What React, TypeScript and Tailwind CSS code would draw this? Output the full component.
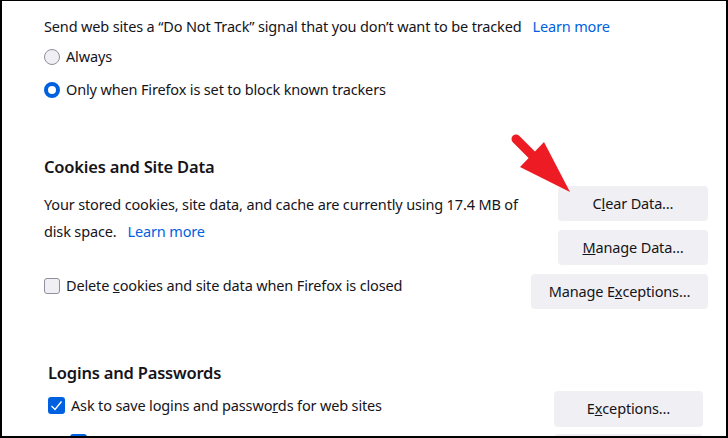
import React from "react";

const font = { fontFamily: '"Noto Sans", "Open Sans", Arial, sans-serif' };

function Radio({ checked }: { checked?: boolean }) {
  return checked ? (
    <span className="w-[16px] h-[16px] rounded-full border-[4px] border-[#0061e0] bg-white shrink-0" />
  ) : (
    <span className="w-[16px] h-[16px] rounded-full border border-[#8f8f9d] bg-[#f0f0f4] shrink-0" />
  );
}

function Checkbox({ checked }: { checked?: boolean }) {
  return checked ? (
    <span className="w-[17px] h-[17px] rounded-[3px] bg-[#0061e0] flex items-center justify-center shrink-0">
      <svg width="13" height="13" viewBox="0 0 13 13" fill="none">
        <path d="M1.5 7 L5 10.5 L11.5 2.5" stroke="white" strokeWidth="1.4" />
      </svg>
    </span>
  ) : (
    <span className="w-[16px] h-[16px] rounded-[3px] border border-[#8f8f9d] bg-[#f0f0f4] shrink-0" />
  );
}

function Btn({ w, children }: { w: string; children: React.ReactNode }) {
  return (
    <div
      className={`${w} h-[35px] rounded-[4px] bg-[#f0f0f4] flex items-center justify-center`}
    >
      {children}
    </div>
  );
}

export default function App() {
  return (
    <div
      style={font}
      className="relative w-[728px] h-[438px] overflow-hidden bg-white border-black border-t border-l-2 border-r-2 border-b-2 text-[#15141a] text-[14.5px] tracking-[-0.15px]"
    >
      {/* Do Not Track */}
      <div className="pl-[42px] pt-[12px]">
        <div className="h-[27px] flex items-center">
          <span>Send web sites a “Do Not Track” signal that you don’t want to be tracked</span>
          <span className="ml-[11px] text-[#0061e0]">Learn more</span>
        </div>
        <div className="h-[33px] flex items-center gap-[6px]">
          <Radio />
          <span>Always</span>
        </div>
        <div className="h-[33px] flex items-center gap-[6px] pt-[1px]">
          <Radio checked />
          <span>Only when Firefox is set to block known trackers</span>
        </div>
      </div>

      {/* Cookies and Site Data */}
      <div className="pl-[42px] pr-[18px] mt-[49px]">
        <div className="h-[24px] flex items-center text-[16.5px] tracking-[-0.2px] font-semibold">
          Cookies and Site Data
        </div>
        <div className="flex justify-between mt-[7px]">
          <div className="pt-[5px]">
            <div className="h-[27px] flex items-center">
              Your stored cookies, site data, and cache are currently using 17.4 MB of
            </div>
            <div className="h-[27px] flex items-center">
              <span>disk space.</span>
              <span className="ml-[11px] text-[#0061e0]">Learn more</span>
            </div>
            <div className="h-[27px] mt-[27px] flex items-center gap-[6px]">
              <Checkbox />
              <span>
                Delete <u>c</u>ookies and site data when Firefox is closed
              </span>
            </div>
          </div>
          <div className="flex flex-col items-end gap-[9px]">
            <Btn w="w-[150px]">
              C<u>l</u>ear Data…
            </Btn>
            <Btn w="w-[150px]">
              <u>M</u>anage Data…
            </Btn>
            <Btn w="w-[177px]">
              Manage E<u>x</u>ceptions…
            </Btn>
          </div>
        </div>
      </div>

      {/* Logins and Passwords */}
      <div className="pl-[46px] pr-[23px] mt-[52px]">
        <div className="h-[24px] flex items-center text-[16.5px] tracking-[-0.2px] font-semibold">
          Logins and Passwords
        </div>
        <div className="flex justify-between items-start mt-[7px]">
          <div className="flex items-center gap-[6px] h-[27px]">
            <Checkbox checked />
            <span>
              Ask to save logins and passwo<u>r</u>ds for web sites
            </span>
          </div>
          <div className="w-[149px] h-[36px] mt-[-1px] rounded-[4px] bg-[#f0f0f4] flex items-center justify-center">
            E<u>x</u>ceptions…
          </div>
        </div>
        <div className="flex justify-between mt-[7px]">
          <div className="pl-[22px]">
            <span className="block w-[17px] h-[17px] rounded-[3px] bg-[#0061e0]" />
          </div>
          <div className="w-[149px] h-[36px] rounded-[4px] bg-[#f0f0f4]" />
        </div>
      </div>

      {/* annotation arrow */}
      <svg className="absolute left-0 top-0" width="728" height="438" viewBox="0 0 728 438">
        <line x1="514" y1="138" x2="537" y2="161" stroke="#ed1c24" strokeWidth="9" strokeLinecap="round" />
        <polygon points="518,166 542,141 568,191" fill="#ed1c24" />
      </svg>
    </div>
  );
}
